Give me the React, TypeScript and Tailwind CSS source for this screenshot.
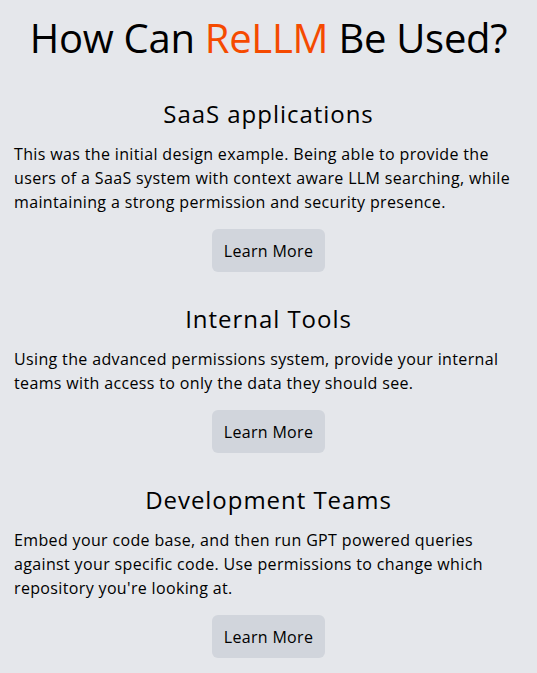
const sections = [
  {
    title: "SaaS applications",
    body: "This was the initial design example. Being able to provide the users of a SaaS system with context aware LLM searching, while maintaining a strong permission and security presence.",
  },
  {
    title: "Internal Tools",
    body: "Using the advanced permissions system, provide your internal teams with access to only the data they should see.",
  },
  {
    title: "Development Teams",
    body: "Embed your code base, and then run GPT powered queries against your specific code. Use permissions to change which repository you're looking at.",
  },
];

export default function App() {
  return (
    <div
      className="min-h-screen bg-gray-200 px-[14px] pt-[18px] pb-8 text-black"
      style={{ fontFamily: '"Open Sans", "Liberation Sans", sans-serif' }}
    >
      <h1 className="text-center text-[40px] leading-[40px] font-normal tracking-[-0.007em]">
        How Can <span className="text-orange-600">ReLLM</span> Be Used?
      </h1>

      <div className="mt-10 flex flex-col gap-[31px]">
        {sections.map((s) => (
          <section key={s.title} className="flex flex-col items-center">
            <h2 className="text-2xl leading-8 font-normal tracking-[0.04em]">{s.title}</h2>
            <p className="mt-3 w-full text-base leading-6 tracking-[0.022em]">{s.body}</p>
            <button className="mt-[15px] h-[43px] rounded-md bg-gray-300 px-3 text-base tracking-[0.02em]">
              Learn More
            </button>
          </section>
        ))}
      </div>
    </div>
  );
}
